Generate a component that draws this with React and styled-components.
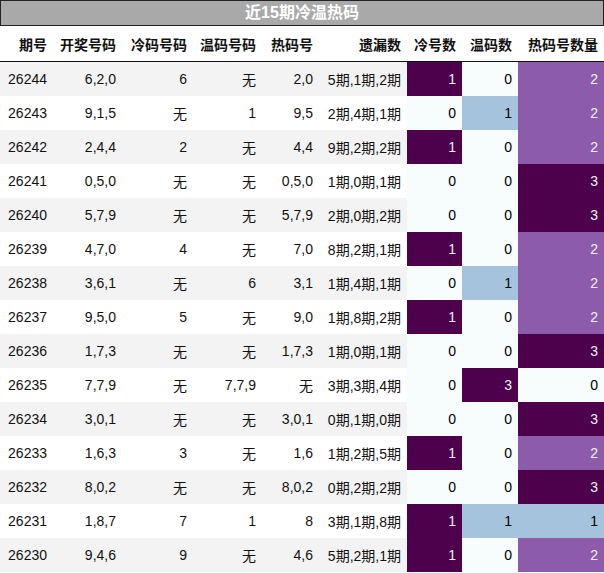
import React from "react";
import styled, { createGlobalStyle } from "styled-components";

const GlobalStyle = createGlobalStyle`
  body {
    margin: 0;
    background: #fff;
    font-family: "Liberation Sans", "Noto Sans CJK SC", sans-serif;
  }
`;

const rows = [
  ["26244", "6,2,0", "6", "无", "2,0", "5期,1期,2期", 1, 0, 2],
  ["26243", "9,1,5", "无", "1", "9,5", "2期,4期,1期", 0, 1, 2],
  ["26242", "2,4,4", "2", "无", "4,4", "9期,2期,2期", 1, 0, 2],
  ["26241", "0,5,0", "无", "无", "0,5,0", "1期,0期,1期", 0, 0, 3],
  ["26240", "5,7,9", "无", "无", "5,7,9", "2期,0期,2期", 0, 0, 3],
  ["26239", "4,7,0", "4", "无", "7,0", "8期,2期,1期", 1, 0, 2],
  ["26238", "3,6,1", "无", "6", "3,1", "1期,4期,1期", 0, 1, 2],
  ["26237", "9,5,0", "5", "无", "9,0", "1期,8期,2期", 1, 0, 2],
  ["26236", "1,7,3", "无", "无", "1,7,3", "1期,0期,1期", 0, 0, 3],
  ["26235", "7,7,9", "无", "7,7,9", "无", "3期,3期,4期", 0, 3, 0],
  ["26234", "3,0,1", "无", "无", "3,0,1", "0期,1期,0期", 0, 0, 3],
  ["26233", "1,6,3", "3", "无", "1,6", "1期,2期,5期", 1, 0, 2],
  ["26232", "8,0,2", "无", "无", "8,0,2", "0期,2期,2期", 0, 0, 3],
  ["26231", "1,8,7", "7", "1", "8", "3期,1期,8期", 1, 1, 1],
  ["26230", "9,4,6", "9", "无", "4,6", "5期,2期,1期", 1, 0, 2],
];

const headers = ["期号", "开奖号码", "冷码号码", "温码号码", "热码号", "遗漏数", "冷号数", "温码数", "热码号数量"];
const widths = [53, 69, 71, 69, 57, 88, 55, 56, 86];

// scale per column: value -> level (0 white, 1 blue, 2 purple, 3 dark)
const levels = [
  { 0: 0, 1: 3 },
  { 0: 0, 1: 1, 3: 3 },
  { 0: 0, 1: 1, 2: 2, 3: 3 },
];

const shades = [
  { bg: "#f7fcfd", fg: "#000" },
  { bg: "#a6c3de", fg: "#000" },
  { bg: "#8c5cab", fg: "#f1f1f1" },
  { bg: "#4d004b", fg: "#f1f1f1" },
];

const Wrap = styled.div`
  width: 604px;
`;

const Title = styled.div`
  height: 24px;
  border: 1px solid #222;
  width: 602px;
  background: #a9a9a9;
  color: #fff;
  font-weight: bold;
  font-size: 16px;
  line-height: 24px;
  text-align: center;
`;

const Table = styled.table`
  border-collapse: collapse;
  table-layout: fixed;
  width: 604px;
  font-size: 14px;
  color: #111;
`;

const HeadCell = styled.th`
  height: 35px;
  padding: 0 6px 0 0;
  text-align: right;
  font-weight: bold;
  font-size: 14px;
  color: #111;
  background: #fff;
  border-bottom: 1px solid #111;
  white-space: nowrap;
`;

const Row = styled.tr`
  background: ${p => (p.$odd ? "#f3f3f3" : "#fff")};
`;

const Cell = styled.td`
  height: 34px;
  padding: 0 6px 0 0;
  text-align: right;
  white-space: nowrap;
  background: ${p => p.$bg || "transparent"};
  color: ${p => p.$fg || "#111"};
`;

export default function App() {
  return (
    <Wrap>
      <GlobalStyle />
      <Title>近15期冷温热码</Title>
      <Table>
        <colgroup>
          {widths.map((w, i) => (
            <col key={i} style={{ width: w }} />
          ))}
        </colgroup>
        <thead>
          <tr>
            {headers.map(h => (
              <HeadCell key={h}>{h}</HeadCell>
            ))}
          </tr>
        </thead>
        <tbody>
          {rows.map((r, i) => (
            <Row key={r[0]} $odd={i % 2 === 0}>
              {r.slice(0, 6).map((v, j) => (
                <Cell key={j}>{v}</Cell>
              ))}
              {r.slice(6).map((v, j) => {
                const s = shades[levels[j][v]];
                return (
                  <Cell key={"c" + j} $bg={s.bg} $fg={s.fg}>
                    {v}
                  </Cell>
                );
              })}
            </Row>
          ))}
        </tbody>
      </Table>
    </Wrap>
  );
}
